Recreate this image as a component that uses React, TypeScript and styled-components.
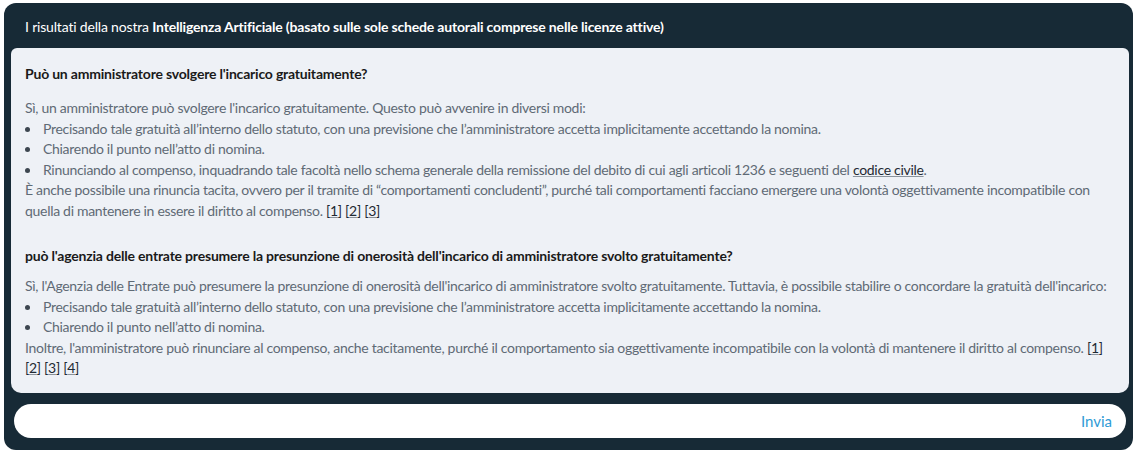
import React from "react";
import styled, { createGlobalStyle } from "styled-components";

const Global = createGlobalStyle`
  html, body { margin: 0; padding: 0; background: #ffffff; }
  body { font-family: "Lato", "Noto Sans", sans-serif; }
`;

const Page = styled.div`
  padding: 3px 4px 2px 4px;
`;

const Shell = styled.div`
  background: #172a36;
  border-radius: 12px;
  padding: 0 4px 12px 7px;
  display: flex;
  flex-direction: column;
`;

const Header = styled.div`
  color: #ffffff;
  font-size: 14px;
  line-height: 20px;
  letter-spacing: -0.18px;
  padding: 14px 14px 11px 14px;
  b { font-weight: 700; }
`;

const Panel = styled.div`
  background: #eef1f6;
  border-radius: 6px 6px 10px 10px;
  padding: 16px 14px 14px 14px;
  display: flex;
  flex-direction: column;
  gap: 25px;
`;

const Block = styled.div`
  display: flex;
  flex-direction: column;
`;

const Question = styled.div<{ $space: number }>`
  color: #1a1a1a;
  font-weight: 700;
  font-size: 14px;
  line-height: 20px;
  letter-spacing: -0.2px;
  margin-bottom: ${(p) => p.$space}px;
`;

const Text = styled.div`
  color: #5f6a75;
  font-size: 14px;
  line-height: 20.5px;
  letter-spacing: -0.3px;
`;

const List = styled.ul`
  list-style: none;
  margin: 0;
  padding: 0;
`;

const Item = styled.li`
  position: relative;
  padding-left: 18px;
  &::before {
    content: "";
    position: absolute;
    left: 0;
    top: 8px;
    width: 5px;
    height: 5px;
    border-radius: 50%;
    background: #3d4650;
  }
`;

const Ref = styled.span`
  color: #1f2a33;
  text-decoration: underline;
  text-decoration-color: #8a939c;
`;

const Cite = styled.span`
  color: #1f2a33;
  white-space: nowrap;
  text-decoration: underline;
  text-decoration-color: #8a939c;
`;

const Citation = ({ n }: { n: number }) => <Cite>[{n}]</Cite>;

const InputRow = styled.div`
  margin: 11px 3px 0 3px;
  height: 34px;
  background: #ffffff;
  border-radius: 17px;
  display: flex;
  align-items: center;
  justify-content: flex-end;
  padding: 0 14px;
`;

const Send = styled.button`
  background: none;
  border: none;
  color: #2f9bd6;
  font-family: "Lato", "Noto Sans", sans-serif;
  font-size: 15px;
  padding: 0;
  cursor: pointer;
`;

export default function App() {
  return (
    <Page>
      <Global />
      <Shell>
        <Header>
          I risultati della nostra{" "}
          <b>Intelligenza Artificiale (basato sulle sole schede autorali comprese nelle licenze attive)</b>
        </Header>
        <Panel>
          <Block>
            <Question $space={14}>Può un amministratore svolgere l'incarico gratuitamente?</Question>
            <Text>
              Sì, un amministratore può svolgere l'incarico gratuitamente. Questo può avvenire in diversi modi:
              <List>
                <Item>
                  Precisando tale gratuità all’interno dello statuto, con una previsione che l’amministratore
                  accetta implicitamente accettando la nomina.
                </Item>
                <Item>Chiarendo il punto nell’atto di nomina.</Item>
                <Item>
                  Rinunciando al compenso, inquadrando tale facoltà nello schema generale della remissione del
                  debito di cui agli articoli 1236 e seguenti del <Ref>codice civile</Ref>.
                </Item>
              </List>
              È anche possibile una rinuncia tacita, ovvero per il tramite di “comportamenti concludenti”, purché
              tali comportamenti facciano emergere una volontà oggettivamente incompatibile con quella di mantenere
              in essere il diritto al compenso. <Citation n={1} /> <Citation n={2} /> <Citation n={3} />
            </Text>
          </Block>
          <Block>
            <Question $space={10}>
              può l'agenzia delle entrate presumere la presunzione di onerosità dell'incarico di amministratore
              svolto gratuitamente?
            </Question>
            <Text>
              Sì, l'Agenzia delle Entrate può presumere la presunzione di onerosità dell'incarico di amministratore
              svolto gratuitamente. Tuttavia, è possibile stabilire o concordare la gratuità dell'incarico:
              <List>
                <Item>
                  Precisando tale gratuità all’interno dello statuto, con una previsione che l’amministratore
                  accetta implicitamente accettando la nomina.
                </Item>
                <Item>Chiarendo il punto nell’atto di nomina.</Item>
              </List>
              Inoltre, l'amministratore può rinunciare al compenso, anche tacitamente, purché il comportamento sia
              oggettivamente incompatibile con la volontà di mantenere il diritto al compenso. <Citation n={1} />{" "}
              <Citation n={2} /> <Citation n={3} /> <Citation n={4} />
            </Text>
          </Block>
        </Panel>
        <InputRow>
          <Send>Invia</Send>
        </InputRow>
      </Shell>
    </Page>
  );
}
